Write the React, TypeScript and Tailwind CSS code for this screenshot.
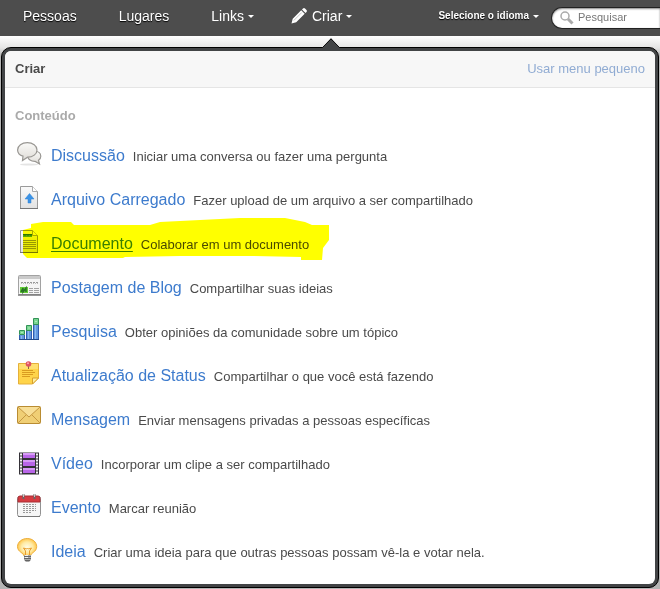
import React from "react";

type Item = { title: string; text: string; icon: React.ReactNode; marked?: boolean };

function Icon({ children }: { children: React.ReactNode }) {
  return (
    <svg width="24" height="24" viewBox="0 0 24 24" fill="none" className="shrink-0 overflow-visible" aria-hidden="true">
      {children}
    </svg>
  );
}

function Page() {
  return (
    <>
      <path d="M3.500.5h12l5 5v17h-17z" fill="url(#paper)" stroke="#9a9a9a" />
      <path d="M3 22.500h18" stroke="#777" />
      <path d="M15.500.5v5h5" fill="#fff" stroke="#aaa" />
    </>
  );
}

const discussion = (
  <Icon>
    <defs>
      <linearGradient id="bubble" x1="0" y1="0" x2="0" y2="1">
        <stop stopColor="#fafaf8" />
        <stop offset="1" stopColor="#dfdcd7" />
      </linearGradient>
      <linearGradient id="paper" x1="0" y1="0" x2="0" y2="1">
        <stop stopColor="#fafafa" />
        <stop offset="1" stopColor="#e2e2e2" />
      </linearGradient>
    </defs>
    <ellipse cx="12" cy="22.500" rx="9" ry="1" fill="#e4e4e4" />
    <path d="M17 9c4 0 6.800 2.200 6.800 5.200 0 1.800-.9 3.200-2.300 4.100l1 3.700-4.200-2.600c-4.400.2-7.400-2-7.400-5.200s2.500-5.200 6.100-5.200z" fill="url(#bubble)" stroke="#9a9894" strokeWidth="1.200" />
    <path d="M10.300.6c5.500 0 9.700 3.100 9.700 7.300s-4.200 7.300-9.400 7.300L5.500 18.500l.5-4.400C2.600 13 .6 10.700.6 7.900c0-4.200 4.200-7.300 9.700-7.300z" fill="url(#bubble)" stroke="#9a9894" strokeWidth="1.200" />
  </Icon>
);

const upload = (
  <Icon>
    <Page />
    <path d="M12.500 7.500l4.500 5.500h-3v4h-3v-4H8z" fill="#3b93e6" stroke="#2f83d4" strokeWidth=".5" />
  </Icon>
);

const documentIcon = (
  <Icon>
    <Page />
    <path d="M6 4h9v3H6z" fill="#5aa852" />
    <path d="M6 4.500h9M8 5v1M11 5v1M14 5v1" stroke="#2f7433" />
    <path d="M6 10.500h13M6 12.500h13M6 14.500h13M6 16.500h13M6 18.500h13" stroke="#999" />
  </Icon>
);

const blog = (
  <Icon>
    <rect x="1.500" y="1.500" width="22" height="19" rx="1" fill="#f5f5f5" stroke="#a2a2a2" />
    <path d="M2 2h21v3H2z" fill="#cacaca" />
    <path d="M1 21h23" stroke="#777" strokeWidth="1.500" />
    <path d="M4 8.500h17" stroke="#999" strokeDasharray="2 1" />
    <path d="M4 9.500h17" stroke="#bbb" strokeDasharray="1 1" />
    <path d="M3 13h8v6H3z" fill="#66cf37" />
    <path d="M4 18l2-4v4l3-4v4" stroke="#287326" strokeWidth="1.500" />
    <path d="M12 14.500h4m1 0h5M12 16.500h4m1 0h5M12 18.500h4m1 0h5" stroke="#a2a2a2" />
  </Icon>
);

const poll = (
  <Icon>
    <path d="M2.500 17v4.500h5V17M9.500 12v9.500h5V12M16.500 6v15.500h5V6" fill="#6499df" stroke="#315db0" />
    <path d="M4.500 18v3M11.500 13v8M18.500 7v14" stroke="#8cb9ef" />
    <path d="M2.500 12.500h5v4h-5zM9.500 7.500h5v5h-5zM16.500.5h5v6h-5z" fill="#78d491" stroke="#329357" />
    <path d="M4 14.500h2M11 10h2M18 3.500h2" stroke="#a9edb6" />
    <path d="M2 21.500h20" stroke="#244b8b" />
  </Icon>
);

const note = (
  <Icon>
    <path d="M1.500 1.500h20V16l-6 6h-14z" fill="#ffd449" stroke="#e5b03a" />
    <path d="M2 2h19v5H2z" fill="#ffe070" />
    <path d="M21.500 16l-6 6v-6z" fill="#fff0a0" stroke="#d7a02e" />
    <path d="M5 8.500h11M5 10.500h13M5 12.500h11M5 14.500h8" stroke="#d99c20" />
    <path d="M11.500 4v3" stroke="#8a6a42" />
    <circle cx="11.500" cy="2" r="2.800" fill="#df5260" />
    <circle cx="11" cy="1.300" r="1" fill="#ffacb2" />
  </Icon>
);

const message = (
  <Icon>
    <rect x=".5" y=".5" width="23" height="17" rx="1" fill="#f0cf75" stroke="#b98c32" />
    <path d="M1 17l8-8M23 17l-8-8" stroke="#c69842" />
    <path d="M1 1l11 10L23 1" fill="#f8df97" stroke="#c69842" />
  </Icon>
);

const video = (
  <Icon>
    <path d="M2 2.500h20v22H2z" fill="#353238" />
    <path d="M6 3h12v5H6zM6 10h12v6H6zM6 18h12v5H6z" fill="#b966e8" />
    <path d="M6 3h12v2H6zM6 10h12v2H6zM6 18h12v2H6z" fill="#d79bf6" />
    <path d="M4 3.500v20M20 3.500v20" stroke="#f3f3f3" strokeWidth="2" strokeDasharray="2 1" />
  </Icon>
);

const event = (
  <Icon>
    <rect x=".5" y="2.500" width="23" height="20" rx="2" fill="#f6f6f6" stroke="#929292" />
    <path d="M1 8V4q0-2 2-2h18q2 0 2 2v4z" fill="#d63b41" stroke="#a82e34" />
    <path d="M1 22.500h22" stroke="#777" />
    <path d="M6.500 0v5M17.500 0v5" stroke="#666" strokeWidth="2" />
    <path d="M6.500 0v3M17.500 0v3" stroke="#ccc" />
    <path d="M6 10.500h13M6 12.500h13M6 14.500h13M6 16.500h13M6 18.500h8" stroke="#999" strokeDasharray="2 1" />
  </Icon>
);

const idea = (
  <Icon>
    <defs>
      <radialGradient id="bulb">
        <stop stopColor="#fffce7" />
        <stop offset=".6" stopColor="#ffeaa3" />
        <stop offset="1" stopColor="#ffc64c" />
      </radialGradient>
    </defs>
    <path d="M7 18c0-3-6.500-4-6.500-9.300C.5 4 5 .5 10.200.5s9.500 3.500 9.500 8.200C19.700 14 13.500 15 13.500 18z" fill="url(#bulb)" stroke="#edb03f" />
    <path d="M8.500 18v-5l-2-3 3 1 1-1 1 1 3-1-2 3v5" stroke="#e89c2e" />
    <path d="M7 17h7v5l-2 2H9l-2-2z" fill="#aaa" />
    <path d="M7 18.500h7M7 20.500h7M8 22.500h5" stroke="#666" />
    <path d="M8 17.500h3M8 19.500h3" stroke="#eee" />
  </Icon>
);

const items: Item[] = [
  { title: "Discussão", text: "Iniciar uma conversa ou fazer uma pergunta", icon: discussion },
  { title: "Arquivo Carregado", text: "Fazer upload de um arquivo a ser compartilhado", icon: upload },
  { title: "Documento", text: "Colaborar em um documento", icon: documentIcon, marked: true },
  { title: "Postagem de Blog", text: "Compartilhar suas ideias", icon: blog },
  { title: "Pesquisa", text: "Obter opiniões da comunidade sobre um tópico", icon: poll },
  { title: "Atualização de Status", text: "Compartilhar o que você está fazendo", icon: note },
  { title: "Mensagem", text: "Enviar mensagens privadas a pessoas específicas", icon: message },
  { title: "Vídeo", text: "Incorporar um clipe a ser compartilhado", icon: video },
  { title: "Evento", text: "Marcar reunião", icon: event },
  { title: "Ideia", text: "Criar uma ideia para que outras pessoas possam vê-la e votar nela.", icon: idea },
];

function Caret() {
  return (
    <svg width="6" height="3" viewBox="0 0 6 3" fill="currentColor" aria-hidden="true">
      <path d="M0 0h6L3 3z" />
    </svg>
  );
}

export default function App() {
  return (
    <div className="overflow-hidden bg-white font-['Liberation_Sans',Arial,sans-serif] text-[13px] text-[#4a4a4a]">
      <header className="flex h-9 items-center bg-[#4d4d4d] pb-1 text-sm text-white">
        <nav className="flex grow items-center pl-[23px] [text-shadow:0_1px_1px_#000]">
          <a href="#pessoas">Pessoas</a>
          <a href="#lugares" className="ml-[42px]">Lugares</a>
          <button type="button" className="ml-[42px] flex items-center gap-1">
            Links <Caret />
          </button>
          <button type="button" className="ml-[37px] flex items-center gap-1">
            <svg width="16" height="16" viewBox="0 0 16 16" fill="#fff" className="mr-px" aria-hidden="true">
              <path d="M.5 15.500l1.200-4.700 8.500-8.500 3.500 3.500-8.500 8.500zM11 1.500l1-1q1-.8 2 0l1.500 1.500q.8 1 0 2l-1 1z" />
              <path d="M2.800 12.500l8-8" stroke="#aaa" strokeWidth=".7" />
            </svg>
            Criar <Caret />
          </button>
        </nav>
        <button type="button" className="flex shrink-0 items-center gap-1 text-[10px] font-bold [text-shadow:0_1px_1px_#000]">
          Selecione o idioma <Caret />
        </button>
        <label className="mt-1 ml-3 flex h-[22px] w-[109px] shrink-0 items-center gap-1 rounded-l-full border border-r-0 border-[#222] bg-white pl-2 shadow-[inset_0_1px_2px_#888]">
          <svg width="14" height="14" viewBox="0 0 14 14" fill="none" stroke="#aaa" aria-hidden="true">
            <circle cx="5" cy="5" r="4" strokeWidth="1.500" />
            <path d="M8 8l4.500 4.500" strokeWidth="3" />
          </svg>
          <input type="search" aria-label="Pesquisar" placeholder="Pesquisar" className="w-20 bg-transparent text-[11px] text-[#666] outline-none placeholder:text-[#777]" />
        </label>
      </header>

      <div className="relative bg-linear-to-b from-white from-0% via-[#e4e4e4] via-[12px] to-[#b5b5b5] to-[20px] px-px pt-[11px] pb-px">
        <svg width="18" height="12" viewBox="0 0 18 12" className="absolute top-[2px] left-1/2 z-10 -ml-2" aria-hidden="true">
          <path d="M0 10L9 0l9 10v2H0z" fill="#424446" />
          <path d="M0 10L9 1l9 9" fill="none" stroke="#111" />
        </svg>
        <main className="rounded-[10px] border border-black bg-[#424446] p-[3px]">
          <div className="overflow-hidden rounded-md bg-white">
            <div className="flex h-[37px] items-center justify-between border-b border-[#e5e5e5] bg-[#f7f7f7] px-[10px]">
              <h1 className="font-bold">Criar</h1>
              <a href="#menu" className="text-[#91acd3]">Usar menu pequeno</a>
            </div>
            <section className="px-[10px] pt-[18px] pb-[10px]">
              <h2 className="leading-5 font-bold text-[#aaa]">Conteúdo</h2>
              <ul className="mt-2">
                {items.map((item) => (
                  <li key={item.title} className="relative flex h-11 items-center">
                    <a href="#criar" className="flex items-center pl-[2px]">
                      <span className="mb-1">{item.icon}</span>
                      <span className="ml-[10px] flex items-baseline gap-2 whitespace-nowrap">
                        <span className={item.marked ? "text-base text-[#3a8028] underline underline-offset-2" : "text-base text-[#3d7bcd]"}>
                          {item.title}
                        </span>
                        <span>{item.text}</span>
                      </span>
                    </a>
                    {item.marked && (
                      <svg width="312" height="44" viewBox="0 0 312 44" className="pointer-events-none absolute top-0 left-[5px] overflow-visible mix-blend-multiply" aria-hidden="true">
                        <path d="M3 8l8-2V2l12-2h28l3 3h76l10-3 80-4h45l20 4 7 3h17v15l-6 8-1 12h-21v-3l-51-1h-70l-55 1-2 1H7l-4-4z" fill="#ff0" />
                      </svg>
                    )}
                  </li>
                ))}
              </ul>
            </section>
          </div>
        </main>
      </div>
    </div>
  );
}
